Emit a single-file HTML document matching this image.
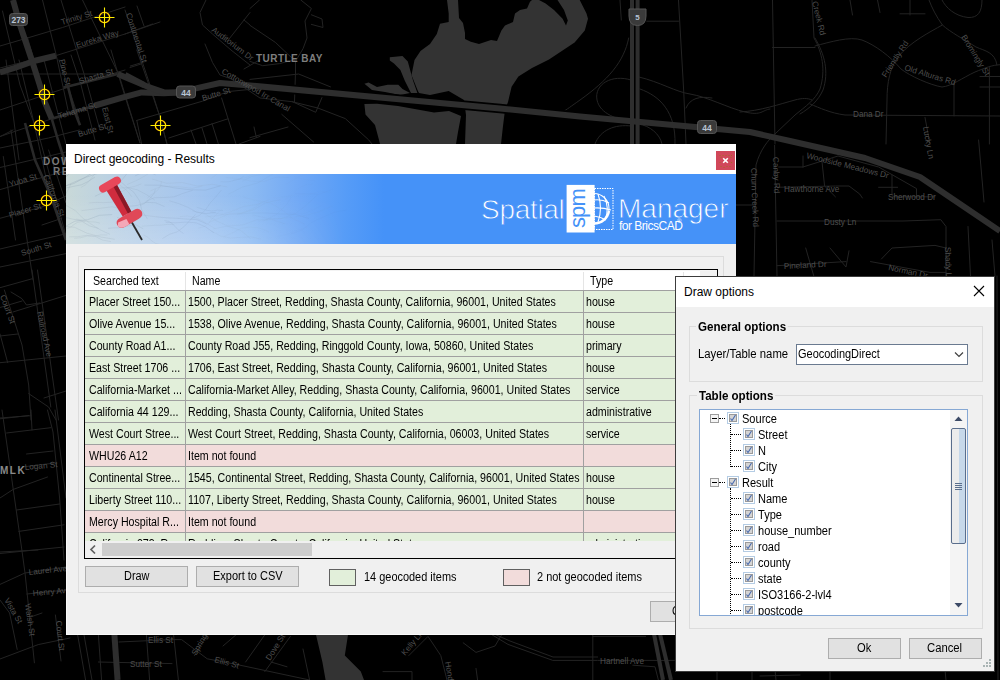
<!DOCTYPE html>
<html><head><meta charset="utf-8">
<style>
*{margin:0;padding:0;box-sizing:border-box}
html,body{width:1000px;height:680px;overflow:hidden;background:#000;font-family:"Liberation Sans",sans-serif;color:#000}
.a{position:absolute}
.ms{position:absolute;white-space:nowrap;font-size:12px;line-height:14px;transform-origin:0 0;color:#000}
.ttl{position:absolute;white-space:nowrap;font-size:12px;line-height:15px;color:#000}
#map{position:absolute;left:0;top:0}
.b{font-weight:bold;font-size:12px;line-height:14px;white-space:nowrap;transform:scaleX(.965);transform-origin:0 0}

</style></head><body>
<svg id="map" width="1000" height="680" viewBox="0 0 1000 680">
<g fill="#333333"><path d="M447.0 0.0 L458.0 0.0 L459.0 18.0 L463.0 23.0 L465.0 33.0 L465.0 39.0 L470.8 41.7 L479.0 44.0 L491.0 40.0 L497.0 41.0 L501.4 30.6 L505.0 25.5 L513.0 22.0 L515.0 13.6 L520.0 10.0 L527.0 8.5 L530.0 1.7 L532.0 0.0 L539.0 0.0 L545.6 3.4 L554.0 10.0 L562.6 18.7 L566.0 25.5 L567.8 20.4 L564.0 10.0 L557.5 0.0 L579.7 0.0 L586.5 13.6 L588.0 18.7 L584.8 30.6 L574.6 42.5 L549.0 59.5 L532.0 68.0 L518.4 76.5 L511.6 86.7 L508.0 102.0 L505.0 110.0 L503.0 126.0 L501.0 144.0 L465.0 144.0 L466.0 115.0 L464.0 100.0 L448.7 91.0 L430.0 95.0 L419.0 93.0 L417.5 90.0 L411.5 75.0 L414.5 60.0 L420.5 51.0 L430.0 44.0 L436.8 34.0 L440.0 23.8 L448.7 22.0 L448.7 13.6Z"/><path d="M364.4 104.0 L377.0 103.8 L398.0 106.0 L434.0 112.5 L449.0 111.0 L461.0 116.0 L458.0 132.0 L456.0 144.0 L380.0 144.0 L379.0 140.0 L375.0 125.0 L365.5 114.4Z"/><path d="M389.8 57.2 L402.5 56.0 L407.8 61.4 L413.0 80.5 L417.4 93.0 L411.0 93.0 L404.7 80.5 L400.4 70.0 L394.0 63.6 L389.8 60.4Z"/><path d="M364.4 83.7 L368.6 82.6 L377.0 86.9 L387.7 84.7 L398.3 84.7 L402.5 89.0 L410.0 93.0 L400.0 95.0 L385.0 92.0 L372.0 90.0Z"/><path d="M316.0 634.8 L348.0 634.8 L344.8 655.6 L360.8 671.6 L364.0 680.0 L325.6 680.0 L322.4 662.0Z"/></g>
<g fill="none" stroke="#232323" stroke-width="1" stroke-linejoin="round" stroke-linecap="round"><path d="M0.0 46.0 L29.0 37.5 L62.5 27.5 L125.0 7.0"/><path d="M56.0 55.6 L125.0 34.0 L160.0 22.0"/><path d="M75.0 85.0 L125.0 70.0"/><path d="M42.5 0.0 L56.0 54.0 L68.0 110.0"/><path d="M61.0 0.0 L87.5 85.0 L100.0 130.0"/><path d="M82.5 0.0 L119.0 75.0 L140.0 143.0"/><path d="M2.5 11.0 L20.0 85.0 L34.0 123.0 L50.0 196.0"/><path d="M27.5 37.5 L41.0 85.0"/><path d="M71.0 55.0 L81.0 85.0 L95.0 140.0"/><path d="M125.0 10.0 L150.0 85.0 L159.0 114.0 L167.0 144.0"/><path d="M125.0 34.0 L152.5 24.0"/><path d="M137.0 6.0 L144.0 26.0"/><path d="M130.0 67.5 L141.0 64.0"/><path d="M206.0 0.0 L200.0 12.5 L202.5 25.0 L212.5 34.0 L231.0 50.0 L250.0 65.0"/><path d="M227.5 41.0 L250.0 12.5"/><path d="M244.0 20.0 L250.0 25.0"/><path d="M205.0 44.0 L212.5 62.5 L220.0 75.0 L231.0 78.8 L260.0 98.0 L292.0 101.7 L317.8 108.0 L345.3 118.6 L368.6 139.8 L372.0 144.0"/><path d="M136.8 120.4 L202.4 101.2 L228.0 91.6 L260.0 88.4"/><path d="M111.0 50.0 L117.6 72.4 L127.0 102.8 L140.0 142.8"/><path d="M136.8 50.0 L159.0 114.0 L167.0 144.0"/><path d="M136.8 120.4 L141.6 144.0"/><path d="M168.8 138.0 L228.0 118.8"/><path d="M191.0 130.0 L196.0 144.0"/><path d="M202.0 128.0 L207.0 144.0"/><path d="M212.0 123.6 L218.4 144.0"/><path d="M221.6 98.0 L236.0 144.0"/><path d="M239.0 144.0 L260.0 136.4"/><path d="M244.0 69.0 L260.0 59.6"/><path d="M130.4 66.0 L146.4 61.2"/><path d="M0.0 74.0 L117.6 74.0"/><path d="M0.0 68.0 L32.0 60.0"/><path d="M0.0 110.0 L44.0 95.3 L79.4 83.5 L117.0 74.0"/><path d="M0.0 148.0 L48.5 138.0 L79.4 130.0"/><path d="M0.0 136.5 L51.8 118.8"/><path d="M6.0 60.0 L19.0 160.0"/><path d="M19.0 60.0 L34.0 123.0"/><path d="M44.0 60.0 L66.0 144.0"/><path d="M59.0 60.0 L79.0 119.0"/><path d="M250.0 8.5 L259.5 0.0"/><path d="M300.8 0.0 L311.4 8.5 L305.0 21.0 L307.0 38.0 L303.0 48.7 L295.5 61.4 L295.5 72.0 L294.5 101.7"/><path d="M250.0 25.4 L275.4 42.4 L295.5 61.4"/><path d="M250.0 61.4 L262.7 65.7 L279.7 63.6 L295.5 59.3"/><path d="M311.4 14.8 L322.0 19.0 L323.0 27.5 L311.4 24.4"/><path d="M250.0 79.4 L298.7 74.0 L330.5 86.9"/><path d="M292.4 101.7 L315.7 112.3 L322.0 97.5"/><path d="M281.8 114.4 L313.6 142.0"/><path d="M250.0 137.7 L288.0 127.0"/><path d="M254.0 127.0 L256.4 137.7"/><path d="M620.0 0.0 L621.3 20.0"/><path d="M646.7 21.2 L678.5 21.2"/><path d="M678.5 0.0 L683.8 93.0 L686.0 144.0"/><path d="M772.5 0.0 L775.0 144.0"/><path d="M772.5 47.5 L815.0 47.5"/><path d="M925.0 117.5 L930.0 144.0"/><path d="M850.0 0.0 L852.5 15.0"/><path d="M877.5 0.0 L880.0 12.5"/><path d="M910.0 0.0 L910.0 15.0"/><path d="M900.0 13.8 L925.0 13.8"/><path d="M774.6 145.4 L777.0 276.0"/><path d="M803.0 167.0 L838.0 156.0 L878.6 167.0 L916.5 188.6 L916.5 196.8"/><path d="M778.6 167.0 L803.0 167.0"/><path d="M803.0 156.0 L803.0 167.0"/><path d="M822.0 161.6 L824.6 186.0 L835.4 196.8"/><path d="M777.0 187.3 L835.4 186.0 L849.0 186.0 L859.7 194.0 L862.4 198.0"/><path d="M878.6 187.3 L897.6 187.3"/><path d="M892.0 175.0 L892.0 194.0"/><path d="M892.0 196.8 L935.0 196.8"/><path d="M777.0 221.0 L903.0 221.0 L940.8 219.7 L946.0 226.5 L946.0 276.0"/><path d="M881.4 259.0 L892.0 248.0 L935.0 245.4 L946.0 248.0"/><path d="M805.7 248.0 L813.8 276.0"/><path d="M830.0 248.0 L846.0 267.0 L849.0 250.8"/><path d="M777.0 265.7 L846.0 261.6"/><path d="M870.5 261.6 L930.0 272.4 L946.0 272.4"/><path d="M968.0 226.5 L970.5 276.0"/><path d="M992.0 240.0 L995.0 276.0"/><path d="M978.6 140.0 L984.0 202.0"/><path d="M730.0 205.0 L754.0 205.0"/><path d="M32.0 270.0 L50.8 407.0"/><path d="M37.5 270.0 L58.5 420.0"/><path d="M4.4 290.0 L22.0 345.0 L28.7 385.0 L31.0 420.0"/><path d="M28.7 393.6 L48.6 407.0 L56.0 420.0"/><path d="M0.0 287.7 L32.0 278.8"/><path d="M0.0 307.5 L22.0 301.0"/><path d="M13.0 312.0 L66.0 295.4"/><path d="M0.0 362.7 L66.0 356.0"/><path d="M0.0 336.0 L17.7 334.0"/><path d="M44.0 398.0 L66.0 391.0"/><path d="M0.0 418.0 L31.0 415.7"/><path d="M11.0 292.0 L22.0 298.7 L26.5 305.0 L39.7 303.0"/><path d="M0.0 334.0 L7.7 362.7"/><path d="M2.0 410.0 L22.0 551.0 L25.0 573.0 L34.4 662.8"/><path d="M31.0 410.0 L32.0 430.0"/><path d="M47.5 410.0 L53.0 432.0 L59.6 498.0 L64.0 560.0"/><path d="M55.0 410.0 L66.0 498.0"/><path d="M0.0 418.8 L28.7 415.5"/><path d="M6.6 433.0 L50.8 427.7"/><path d="M26.5 454.0 L53.0 451.0"/><path d="M0.0 498.0 L13.0 489.5 L47.5 477.0"/><path d="M16.5 510.0 L59.6 504.0"/><path d="M18.8 531.4 L64.0 524.8"/><path d="M0.0 553.5 L64.0 547.0"/><path d="M22.0 467.0 L55.0 463.0"/><path d="M0.0 584.4 L24.9 573.0 L66.0 567.0"/><path d="M0.0 552.0 L38.0 550.0"/><path d="M26.8 594.0 L66.0 590.0"/><path d="M30.6 617.0 L42.0 613.0"/><path d="M0.0 600.0 L9.6 613.0 L17.2 649.4"/><path d="M55.4 615.0 L61.0 661.0"/><path d="M0.0 659.0 L38.2 644.6 L70.0 638.0"/><path d="M0.0 136.6 L13.0 130.0"/><path d="M3.3 156.5 L15.5 240.0"/><path d="M11.0 130.0 L26.5 236.0 L33.0 280.0"/><path d="M37.5 130.0 L66.0 236.0"/><path d="M48.6 150.0 L66.0 203.0"/><path d="M0.0 189.6 L42.0 177.5 L66.0 170.8"/><path d="M0.0 218.3 L42.0 207.0 L66.0 196.0"/><path d="M0.0 249.0 L66.0 233.8"/><path d="M0.0 167.5 L66.0 152.0"/><path d="M0.0 267.0 L66.0 253.6"/><path d="M42.0 225.0 L61.8 218.3"/><path d="M77.6 634.8 L85.6 680.0"/><path d="M84.0 634.8 L92.0 680.0"/><path d="M98.4 634.8 L101.6 680.0"/><path d="M119.0 642.0 L172.0 639.6 L181.6 639.6 L207.2 658.8 L239.2 665.0 L309.6 680.0"/><path d="M98.4 662.0 L172.0 663.6"/><path d="M146.4 634.8 L149.6 680.0"/><path d="M173.6 634.8 L178.4 680.0"/><path d="M194.4 655.6 L207.2 634.8"/><path d="M223.0 646.0 L236.0 634.8"/><path d="M245.6 662.0 L264.8 634.8"/><path d="M264.8 671.6 L290.4 636.4"/><path d="M271.0 662.0 L287.0 666.8"/><path d="M303.0 649.0 L309.6 680.0"/><path d="M408.8 655.6 L428.0 636.4 L440.8 655.6 L447.0 680.0"/><path d="M383.0 671.6 L412.0 671.6 L412.0 680.0"/><path d="M463.2 642.8 L476.0 652.4 L495.0 646.0 L501.6 634.8"/><path d="M492.0 634.8 L508.0 644.4 L552.8 660.4 L597.6 660.4 L674.4 660.4"/><path d="M496.0 634.8 L510.0 641.0 L553.0 657.0 L597.6 657.0"/><path d="M592.8 634.8 L592.8 680.0"/><path d="M592.8 636.4 L645.6 636.4"/><path d="M476.0 668.4 L477.6 680.0"/><path d="M632.8 665.2 L655.0 666.8 L658.4 680.0"/><path d="M997.0 276.0 L998.0 680.0"/><path d="M717.0 670.0 L717.0 680.0"/><path d="M752.0 670.0 L752.0 680.0"/><path d="M775.0 670.0 L776.0 680.0"/><path d="M830.0 670.0 L830.0 680.0"/><path d="M945.0 670.0 L946.0 680.0"/><path d="M760.0 676.0 L800.0 675.0"/><path d="M628.7 38 C624 62, 608 80, 580 100 S 565 110, 556 114"/><path d="M631 80 C612 74, 594 84, 597 100 C600 114, 618 120, 631 121"/><path d="M639 77 C660 82, 676 92, 690 94 C708 97, 728 108, 745 112 S 762 110, 770 109"/><path d="M640 89 C660 96, 676 112, 675 144"/><path d="M686 108 C690 98, 700 96, 712 98"/><path d="M595 144 C600 130, 615 124, 631 126"/><path d="M639 124 C650 126, 660 134, 662 144"/><path d="M815 46 C830 42, 850 36, 862 40 C875 45, 890 56, 901 69 C910 76, 930 85, 942 87 C952 86, 962 78, 975 72 C985 68, 992 65, 1000 64.7"/><path d="M942.4 25 C930 32, 910 42, 898 57 C890 68, 887 82, 887 100 L886 144"/><path d="M929 0 C932 8, 936 16, 942.4 25 C950 32, 965 40, 976 47 C985 51, 995 52, 997 65"/><path d="M942 0 C946 8, 955 16, 968 17.5 C978 18, 982 12, 982 0"/><path d="M954 83 L954 116"/><path d="M989.4 67.6 L989.4 144"/><path d="M980 76.5 H1000"/><path d="M980 87 H1000"/><path d="M812 0 L814 38 C822 52, 826 70, 820 89 C815 100, 806 106, 795 115 L776 133 C768 140, 760 150, 756 165 L754 276"/><path d="M815 38 C825 55, 829 72, 823 90 C818 101, 810 108, 800 114"/><path d="M740 112 C760 111, 780 104, 795 100 C802 98, 808 98, 812 100"/><path d="M810 104 C820 108, 830 113, 845 115 L1000 116"/></g>
<g fill="none" stroke="#292929" stroke-width="2.6" stroke-linejoin="round"><path d="M63.5 87.5 L90.0 81.0 L117.6 74.0"/><path d="M51.8 118.8 L95.0 105.5"/><path d="M67.5 84.8 L74.0 110.0 L80.0 125.3"/><path d="M51.8 118.8 L58.0 140.0 L66.0 165.0"/><path d="M25.0 123.0 L35.0 160.0 L50.8 196.0 L66.0 240.0"/></g>
<path d="M250 85.5 L440 103 L500 108.5 L580 116.5" stroke="#000" stroke-width="9.5" fill="none"/><g fill="none" stroke="#2e2e2e" stroke-width="6" stroke-linejoin="round"><path d="M13.0 0.0 L20.0 25.0 L31.7 59.7 L39.7 84.8 L44.7 101.8 L51.8 118.8"/><path d="M0.0 72.5 L16.0 67.5 L34.0 61.0 L56.0 55.6"/><path d="M95.0 105.5 L124.0 97.2 L141.6 92.4 L164.0 93.2 L176.8 92.4"/><path d="M117.6 74.0 L148.0 86.8 L164.0 92.4 L176.8 92.4"/><path d="M176.0 92.0 L196.0 88.4 L220.0 83.0 L250.0 85.5 L440.0 103.0 L500.0 108.5 L580.0 116.5 L750.0 132.0 L790.0 141.0 L865.0 158.0 L920.0 177.0 L960.0 204.0 L1000.0 231.0"/><path d="M125.0 75.0 L144.0 85.0"/><path d="M114.4 634.8 L117.6 680.0"/></g>
<g stroke="#2e2e2e" stroke-width="4" fill="none"><path d="M632 0 L632 144"/><path d="M637.6 0 L637.6 144"/><path d="M654 634 L663 680"/><path d="M660 634 L671 680"/></g>
<g font-family="Liberation Sans" font-weight="bold"><rect x="9.5" y="13.5" width="18" height="12" rx="3" fill="#3a3a3a" stroke="#555"/><text x="18.5" y="23" font-size="8.5" fill="#b8c4d4" text-anchor="middle">273</text><rect x="176.5" y="86" width="19" height="12" rx="3" fill="#3a3a3a" stroke="#555"/><text x="186" y="95.5" font-size="8.5" fill="#b8c4d4" text-anchor="middle">44</text><rect x="697.5" y="120.5" width="19" height="13" rx="3" fill="#3a3a3a" stroke="#555"/><text x="707" y="130.5" font-size="8.5" fill="#b8c4d4" text-anchor="middle">44</text><path d="M629 9 L646 9 L646 16 Q646 25.5 637.5 25.5 Q629 25.5 629 16Z" fill="#3a3a3a" stroke="#555"/><text x="637.5" y="20" font-size="8" fill="#b8c4d4" text-anchor="middle">5</text></g>
<g font-family="Liberation Sans" fill="#7a7a7a"><text x="256" y="61.5" font-size="10" font-weight="bold" letter-spacing="0.45" fill="#7e7e7e">TURTLE BAY</text><text x="0" y="474" font-size="10" font-weight="bold" letter-spacing="1.5" fill="#8a8a8a">MLK</text><text x="43" y="164.5" font-size="10" font-weight="bold" letter-spacing="1.5" fill="#7a7a7a">DOW</text><text x="53" y="174.5" font-size="10" font-weight="bold" letter-spacing="1.5" fill="#7a7a7a">RE</text></g>
<g font-family="Liberation Sans" font-size="8.2" fill="#4e4e4e"><text transform="translate(62,25) rotate(-17)">Trinity St</text><text transform="translate(77,48) rotate(-17)">Eureka Way</text><text transform="translate(80,84) rotate(-17)">Shasta St</text><text transform="translate(59,119) rotate(-17)">Tehama St</text><text transform="translate(79,137) rotate(-17)">Butte St</text><text transform="translate(203,101) rotate(-17)">Butte St</text><text transform="translate(126,14) rotate(72)">Continental St</text><text transform="translate(59,60) rotate(76)">Pine St</text><text transform="translate(102,108) rotate(76)">East St</text><text transform="translate(211,31) rotate(37)">Auditorium Dr</text><text transform="translate(221,73) rotate(30)">Cottonwood Irr Canal</text><text transform="translate(886,78) rotate(-57)">Friendly Rd</text><text transform="translate(904,70) rotate(17)">Old Alturas Rd</text><text transform="translate(961,37) rotate(58)">Bromingly St</text><text transform="translate(853,117) rotate(0)">Dana Dr</text><text transform="translate(923,127) rotate(80)">Lucky Ln</text><text transform="translate(806,158) rotate(14)">Woodside Meadows Dr</text><text transform="translate(812,2) rotate(76)">Creek Rd</text><text transform="translate(784,192) rotate(0)">Hawthorne Ave</text><text transform="translate(824,225) rotate(0)">Dusty Ln</text><text transform="translate(784,269) rotate(-3)">Pineland Dr</text><text transform="translate(888,270) rotate(12)">Norman Dr</text><text transform="translate(773,157) rotate(88)">Canby Rd</text><text transform="translate(751,168) rotate(88)">Churn Creek Rd</text><text transform="translate(888,200) rotate(0)">Sherwood Dr</text><text transform="translate(945,247) rotate(88)">Shady Ln</text><text transform="translate(10,187) rotate(-17)">Yuba St</text><text transform="translate(10,218) rotate(-17)">Placer St</text><text transform="translate(22,256) rotate(-17)">South St</text><text transform="translate(43,176) rotate(68)">California St</text><text transform="translate(0,296) rotate(70)">Court St</text><text transform="translate(37,312) rotate(78)">Railroad Ave</text><text transform="translate(25,470) rotate(-5)">Logan St</text><text transform="translate(29,575) rotate(-6)">Laurel Ave</text><text transform="translate(33,596) rotate(-5)">Henry Ave</text><text transform="translate(25,604) rotate(82)">Walsh St</text><text transform="translate(4,600) rotate(60)">Vista St</text><text transform="translate(56,621) rotate(84)">Court St</text><text transform="translate(148,643) rotate(0)">Ellis St</text><text transform="translate(214,662) rotate(15)">Ellis St</text><text transform="translate(130,667) rotate(0)">Sutter St</text><text transform="translate(196,656) rotate(-60)">Spring</text><text transform="translate(270,661) rotate(-58)">Dove St</text><text transform="translate(405,656) rotate(-50)">Kelly Ln</text><text transform="translate(600,664) rotate(0)">Hartnell Ave</text><text transform="translate(445,662) rotate(80)">Honda</text></g>
<g stroke="#ffee00" fill="none"><circle cx="104.5" cy="17.5" r="5.2" stroke="#7a2400" stroke-width="1.8"/><circle cx="104.5" cy="17.5" r="5.2" stroke-width="1.05"/><path d="M94.5 17.5 H114.5 M104.5 7.5 V27.5" stroke-width="1.1"/><circle cx="44.5" cy="94.5" r="5.2" stroke="#7a2400" stroke-width="1.8"/><circle cx="44.5" cy="94.5" r="5.2" stroke-width="1.05"/><path d="M34.5 94.5 H54.5 M44.5 84.5 V104.5" stroke-width="1.1"/><circle cx="39.5" cy="125.5" r="5.2" stroke="#7a2400" stroke-width="1.8"/><circle cx="39.5" cy="125.5" r="5.2" stroke-width="1.05"/><path d="M29.5 125.5 H49.5 M39.5 115.5 V135.5" stroke-width="1.1"/><circle cx="160.5" cy="125.5" r="5.2" stroke="#7a2400" stroke-width="1.8"/><circle cx="160.5" cy="125.5" r="5.2" stroke-width="1.05"/><path d="M150.5 125.5 H170.5 M160.5 115.5 V135.5" stroke-width="1.1"/><circle cx="46.5" cy="200.5" r="5.2" stroke="#7a2400" stroke-width="1.8"/><circle cx="46.5" cy="200.5" r="5.2" stroke-width="1.05"/><path d="M36.5 200.5 H56.5 M46.5 190.5 V210.5" stroke-width="1.1"/></g>
</svg>
<div class="a" style="left:66px;top:144px;width:670px;height:491px;background:#f0f0f0"></div>
<div class="a" style="left:66px;top:144px;width:1px;height:491px;background:#fbfbfb"></div>
<div class="a" style="left:66px;top:634px;width:670px;height:1px;background:#fbfbfb"></div>
<div class="a" style="left:66px;top:144px;width:670px;height:30px;background:#fff"></div>
<div class="a ttl" style="left:74px;top:152px">Direct geocoding - Results</div>
<div class="a" style="left:716px;top:151px;width:19px;height:19px;background:#d1475a"></div>
<svg class="a" style="left:716px;top:151px" width="19" height="19"><path d="M7.2 7.2 L11.8 11.8 M11.8 7.2 L7.2 11.8" stroke="#fff" stroke-width="1.6"/><g fill="#a07020"><circle cx="4" cy="4.5" r=".6"/><circle cx="7" cy="4.5" r=".6"/><circle cx="10" cy="4.5" r=".6"/><circle cx="13" cy="4.5" r=".6"/><circle cx="15.5" cy="4.5" r=".6"/><circle cx="5" cy="6.5" r=".6"/><circle cx="15" cy="6.5" r=".6"/><circle cx="4" cy="11.5" r=".6"/><circle cx="15.5" cy="11.5" r=".6"/><circle cx="5" cy="15.5" r=".6"/><circle cx="8" cy="16.5" r=".6"/><circle cx="11" cy="15.5" r=".6"/><circle cx="14" cy="15.5" r=".6"/></g></svg>
<div class="a" style="left:66px;top:144px;width:670px;height:100px"><div class="a" style="left:0;top:30px;width:670px;height:70px;overflow:hidden;background:linear-gradient(90deg,#c9d9d8 0px,#b9d0e4 50px,#a6c6ee 120px,#8cbaf2 185px,#70a8f5 235px,#569cf7 280px,#4592f8 318px)">
<div class="a" style="left:0;top:0;width:300px;height:70px;background:linear-gradient(180deg,rgba(255,255,255,0) 30%,rgba(255,255,255,.22) 100%);-webkit-mask-image:linear-gradient(90deg,#000 0,#000 150px,transparent 280px)"></div>
<svg class="a" style="left:0;top:0" width="670" height="70">
 <g stroke-width="0.8" fill="none" opacity="0.4"><path d="M61.0 10.6 L71.8 5.9 L82.1 0.0 L89.7 -9.0 L97.3 -18.0 L101.2 -29.2" stroke="#8898a8" stroke-opacity="0.38"/><path d="M84.5 16.8 L94.3 12.7 L104.9 12.3 L115.5 13.0 L126.0 14.4 L136.4 12.1" stroke="#8898a8" stroke-opacity="0.33"/><path d="M-7.6 15.5 L2.0 10.8 L11.8 6.5 L21.8 2.7 L31.9 -0.6 L42.4 -2.4" stroke="#6a7e96" stroke-opacity="0.52"/><path d="M125.4 44.7 L133.3 41.5 L139.5 35.9 L144.3 28.9 L150.0 22.6 L155.4 16.1" stroke="#5a6e88" stroke-opacity="0.25"/><path d="M96.4 64.6 L103.5 60.3 L111.4 57.7 L118.1 52.6 L123.8 46.5 L129.5 40.4" stroke="#5a6e88" stroke-opacity="0.31"/><path d="M162.4 20.2 L176.4 13.1 L191.7 9.0 L205.2 1.0 L218.7 -7.2 L228.3 -19.7" stroke="#6a7e96" stroke-opacity="0.18"/><path d="M171.1 40.1 L185.6 39.0 L200.1 39.0 L214.6 39.9 L229.1 40.3 L242.9 44.5" stroke="#5a6e88" stroke-opacity="0.16"/><path d="M98.5 46.5 L103.1 47.5 L107.0 50.2 L110.1 53.8 L113.7 56.8 L117.6 59.5" stroke="#5a6e88" stroke-opacity="0.30"/><path d="M-14.4 32.3 L-10.0 28.2 L-4.8 25.1 L-0.8 20.7 L2.3 15.5 L4.9 10.0" stroke="#8898a8" stroke-opacity="0.53"/><path d="M0.1 31.4 L9.4 36.6 L16.8 44.2 L25.4 50.3 L34.4 55.9 L44.0 60.4" stroke="#8898a8" stroke-opacity="0.50"/><path d="M219.4 10.6 L224.8 7.5 L230.0 4.5 L235.5 1.8 L240.4 -1.9 L243.5 -7.2" stroke="#8898a8" stroke-opacity="0.08"/><path d="M113.6 42.7 L121.4 41.9 L129.0 43.8 L136.3 46.7 L142.9 50.9 L149.6 54.9" stroke="#8898a8" stroke-opacity="0.27"/><path d="M79.5 27.6 L88.5 23.7 L98.3 23.5 L108.0 22.9 L117.1 19.3 L126.5 16.4" stroke="#6a7e96" stroke-opacity="0.34"/><path d="M-19.9 10.6 L-15.6 7.8 L-10.5 6.4 L-5.4 5.4 L-0.7 3.1 L3.4 -0.1" stroke="#5a6e88" stroke-opacity="0.54"/><path d="M130.6 33.2 L135.7 34.8 L140.9 36.3 L146.2 37.0 L151.5 36.1 L156.9 36.4" stroke="#5a6e88" stroke-opacity="0.24"/><path d="M99.7 48.4 L109.8 48.8 L120.0 48.1 L130.2 48.8 L139.5 52.9 L147.9 58.8" stroke="#5a6e88" stroke-opacity="0.30"/><path d="M224.6 60.4 L236.1 55.8 L245.9 48.3 L257.1 43.1 L268.5 38.2 L280.6 36.0" stroke="#5a6e88" stroke-opacity="0.08"/><path d="M139.1 42.9 L152.5 41.6 L165.3 37.5 L177.8 32.4 L191.1 30.5 L203.6 25.4" stroke="#8898a8" stroke-opacity="0.22"/><path d="M68.9 2.0 L72.8 0.1 L76.9 -1.2 L81.3 -0.9 L85.6 -0.8 L89.6 0.8" stroke="#5a6e88" stroke-opacity="0.36"/><path d="M218.8 25.5 L224.4 22.1 L229.1 17.3 L234.2 13.1 L240.5 10.8 L247.1 10.1" stroke="#8898a8" stroke-opacity="0.08"/><path d="M207.3 24.1 L219.0 23.0 L230.5 20.8 L242.2 20.7 L253.5 17.7 L265.2 18.4" stroke="#8898a8" stroke-opacity="0.09"/><path d="M177.3 23.3 L190.5 26.5 L203.9 28.8 L215.7 35.5 L226.1 44.3 L238.5 50.1" stroke="#7d90a4" stroke-opacity="0.15"/><path d="M-13.1 41.4 L-3.6 42.8 L5.7 44.9 L15.1 46.8 L23.3 51.8 L32.5 54.5" stroke="#7d90a4" stroke-opacity="0.53"/><path d="M-14.7 56.0 L-2.2 53.3 L8.9 47.2 L21.6 45.7 L33.5 41.3 L46.2 40.6" stroke="#6a7e96" stroke-opacity="0.53"/><path d="M43.0 20.5 L49.7 19.2 L56.4 17.4 L62.2 13.8 L68.9 12.3 L75.4 9.9" stroke="#8898a8" stroke-opacity="0.41"/><path d="M145.6 57.1 L154.5 62.0 L164.5 64.1 L174.7 63.4 L184.9 62.8 L194.8 65.2" stroke="#7d90a4" stroke-opacity="0.21"/><path d="M132.1 54.3 L137.7 52.7 L142.5 49.5 L146.0 44.8 L150.0 40.7 L154.2 36.6" stroke="#8898a8" stroke-opacity="0.24"/><path d="M176.1 7.4 L185.6 2.6 L196.0 -0.0 L206.4 -2.6 L217.0 -4.7 L227.7 -4.5" stroke="#6a7e96" stroke-opacity="0.15"/><path d="M90.8 42.9 L100.8 43.8 L110.9 44.3 L120.9 45.1 L131.0 45.7 L140.2 49.7" stroke="#5a6e88" stroke-opacity="0.32"/><path d="M210.7 62.5 L217.0 61.3 L223.2 59.6 L229.1 57.0 L235.3 55.2 L241.3 53.0" stroke="#7d90a4" stroke-opacity="0.08"/><path d="M147.4 54.9 L161.9 52.0 L176.6 51.0 L190.4 45.9 L205.2 45.2 L219.2 49.9" stroke="#7d90a4" stroke-opacity="0.21"/><path d="M166.7 6.6 L180.9 3.3 L194.1 -3.0 L208.1 -7.1 L222.7 -5.5 L237.3 -5.0" stroke="#8898a8" stroke-opacity="0.17"/><path d="M28.9 22.3 L40.4 16.9 L51.6 11.0 L59.7 1.3 L66.5 -9.5 L74.3 -19.5" stroke="#6a7e96" stroke-opacity="0.44"/><path d="M8.2 64.3 L14.9 63.7 L21.4 61.9 L28.2 62.3 L34.8 60.9 L41.5 61.0" stroke="#8898a8" stroke-opacity="0.48"/><path d="M192.4 47.3 L207.6 45.4 L222.9 43.7 L238.1 41.8 L253.0 37.9 L266.9 31.5" stroke="#7d90a4" stroke-opacity="0.12"/><path d="M86.3 5.1 L101.0 9.3 L116.2 8.5 L131.1 12.0 L146.2 10.3 L161.3 12.9" stroke="#8898a8" stroke-opacity="0.33"/><path d="M-17.1 69.6 L-8.7 72.9 L0.3 73.0 L9.2 74.6 L16.9 79.1 L22.5 86.2" stroke="#5a6e88" stroke-opacity="0.53"/><path d="M-7.4 14.1 L0.3 13.9 L7.9 12.3 L15.5 10.8 L22.5 7.3 L28.9 3.1" stroke="#6a7e96" stroke-opacity="0.51"/><path d="M228.6 2.6 L232.6 3.9 L236.6 5.2 L240.8 5.7 L245.0 6.1 L249.2 6.9" stroke="#8898a8" stroke-opacity="0.08"/><path d="M144.1 38.2 L158.6 40.7 L173.2 39.9 L187.3 35.9 L200.1 28.7 L214.5 25.7" stroke="#7d90a4" stroke-opacity="0.21"/><path d="M81.2 24.3 L84.6 21.2 L88.6 18.8 L92.1 15.7 L94.6 11.8 L95.6 7.2" stroke="#8898a8" stroke-opacity="0.34"/><path d="M197.6 46.9 L204.3 43.7 L210.8 40.2 L216.1 35.1 L221.2 29.7 L225.2 23.5" stroke="#5a6e88" stroke-opacity="0.10"/><path d="M223.2 38.3 L230.0 39.5 L236.9 39.8 L243.4 37.5 L249.7 34.5 L255.9 31.4" stroke="#7d90a4" stroke-opacity="0.08"/><path d="M42.0 54.3 L47.1 53.9 L52.2 53.8 L57.3 53.2 L62.2 51.9 L67.2 51.1" stroke="#6a7e96" stroke-opacity="0.42"/><path d="M126.4 37.0 L139.1 40.0 L150.2 46.7 L162.0 52.3 L174.4 56.2 L184.4 64.5" stroke="#7d90a4" stroke-opacity="0.25"/><path d="M51.0 43.3 L56.4 45.4 L61.7 47.5 L67.1 49.4 L72.2 52.1 L77.3 54.8" stroke="#6a7e96" stroke-opacity="0.40"/><path d="M186.6 40.9 L200.9 44.3 L215.6 44.6 L229.4 39.5 L241.1 30.6 L251.8 20.4" stroke="#6a7e96" stroke-opacity="0.13"/><path d="M74.2 31.6 L78.3 29.6 L81.9 26.7 L85.0 23.2 L87.9 19.7 L89.4 15.3" stroke="#6a7e96" stroke-opacity="0.35"/><path d="M144.8 4.6 L155.2 -2.9 L164.1 -12.2 L174.4 -19.8 L182.7 -29.6 L192.8 -37.6" stroke="#8898a8" stroke-opacity="0.21"/><path d="M103.5 26.8 L112.8 29.6 L121.8 33.3 L130.4 38.0 L140.0 39.6 L149.7 38.4" stroke="#5a6e88" stroke-opacity="0.29"/><path d="M142.9 48.5 L153.4 44.0 L163.9 39.4 L175.4 39.1 L186.1 35.1 L195.7 28.8" stroke="#8898a8" stroke-opacity="0.21"/><path d="M52.7 36.2 L61.5 32.4 L71.0 31.5 L80.1 28.3 L89.6 28.8 L98.5 32.5" stroke="#6a7e96" stroke-opacity="0.39"/><path d="M52.4 5.4 L59.8 12.2 L67.9 18.3 L73.4 26.6 L75.9 36.4 L81.4 44.8" stroke="#6a7e96" stroke-opacity="0.40"/><path d="M15.4 36.7 L30.7 34.7 L46.0 32.8 L61.2 35.6 L75.7 40.9 L91.0 42.9" stroke="#8898a8" stroke-opacity="0.47"/><path d="M78.5 11.1 L93.9 11.2 L109.1 14.0 L124.3 15.8 L139.7 16.1 L154.5 11.8" stroke="#5a6e88" stroke-opacity="0.34"/><path d="M-19.6 52.6 L-5.5 51.8 L8.5 53.3 L21.2 59.3 L34.8 63.0 L48.7 65.3" stroke="#8898a8" stroke-opacity="0.54"/><path d="M77.5 60.9 L81.9 63.2 L85.4 66.7 L89.5 69.4 L94.2 70.6 L98.8 72.4" stroke="#7d90a4" stroke-opacity="0.34"/><path d="M42.3 18.6 L51.5 14.3 L61.6 13.5 L71.5 15.9 L80.4 20.6 L88.9 26.2" stroke="#7d90a4" stroke-opacity="0.42"/><path d="M159.9 3.5 L172.6 4.6 L185.2 7.1 L197.9 7.5 L210.0 3.3 L222.8 3.5" stroke="#7d90a4" stroke-opacity="0.18"/><path d="M22.7 29.0 L30.0 28.4 L37.4 28.6 L44.8 28.3 L51.9 26.4 L59.1 24.5" stroke="#8898a8" stroke-opacity="0.45"/><path d="M9.9 45.0 L14.8 45.9 L19.6 46.9 L24.4 47.8 L29.3 48.0 L34.0 49.2" stroke="#8898a8" stroke-opacity="0.48"/><path d="M14.9 13.5 L19.3 10.9 L23.0 7.4 L26.0 3.3 L29.3 -0.6 L33.5 -3.4" stroke="#8898a8" stroke-opacity="0.47"/><path d="M75.7 52.2 L82.2 51.8 L88.7 51.3 L95.2 51.2 L101.7 50.4 L108.2 50.6" stroke="#7d90a4" stroke-opacity="0.35"/><path d="M3.1 62.8 L11.8 62.7 L20.3 61.4 L28.8 62.2 L36.5 66.1 L45.0 67.6" stroke="#8898a8" stroke-opacity="0.49"/><path d="M157.4 62.7 L166.3 58.9 L174.8 54.4 L184.4 53.0 L194.0 54.1 L203.0 57.8" stroke="#8898a8" stroke-opacity="0.19"/><path d="M42.1 7.6 L47.9 8.2 L53.2 10.7 L58.0 14.1 L62.3 18.0 L65.7 22.8" stroke="#8898a8" stroke-opacity="0.42"/><path d="M1.3 54.4 L5.0 53.0 L8.1 50.4 L11.5 48.4 L15.5 47.7 L19.5 47.5" stroke="#8898a8" stroke-opacity="0.50"/><path d="M154.6 7.8 L159.5 7.9 L164.3 7.5 L168.9 6.1 L173.7 5.1 L177.7 2.3" stroke="#5a6e88" stroke-opacity="0.19"/><path d="M229.1 19.5 L236.9 19.6 L244.7 19.8 L252.5 20.3 L259.9 17.9 L267.1 15.0" stroke="#5a6e88" stroke-opacity="0.08"/><path d="M-6.2 13.6 L7.9 9.5 L20.7 2.4 L33.0 -5.4 L44.5 -14.4 L55.9 -23.5" stroke="#5a6e88" stroke-opacity="0.51"/></g>
 <g transform="translate(76,66) rotate(-30)">
  <path d="M0 0 L0 -21" stroke="#2a2a2a" stroke-width="1.8"/>
  <path d="M-14 -25 Q-14 -30 -8 -30 L8 -30 Q14 -30 14 -25 Q14 -20 8 -20 L-8 -20 Q-14 -20 -14 -25Z" fill="#e04858"/>
  <path d="M-14 -24 Q-13 -20 -8 -20 L-3 -20 L-3 -26 L-12 -27Z" fill="#f4a8b8"/>
  <path d="M-5 -30 L-6 -61 L6 -61 L5 -30Z" fill="#d02c3e"/>
  <path d="M1 -30 L2 -61 L6 -61 L5 -30Z" fill="#8a1826"/>
  <path d="M-12 -64 Q-12 -68 -8 -68 L8 -68 Q12 -68 12 -64 Q12 -60 8 -60 L-8 -60 Q-12 -60 -12 -64Z" fill="#e8485a"/>
 </g>
 <text x="415" y="45" font-family="Liberation Sans" font-size="28" fill="#fff" stroke="#4592f8" stroke-width="0.8" letter-spacing="-0.3">Spatial</text>
 <rect x="500.6" y="10.9" width="28" height="47.6" fill="#fff"/>
 <text transform="translate(519,54) rotate(-90)" font-family="Liberation Sans" font-size="22" fill="#4592f8" letter-spacing="-0.9">spm</text>
 <rect x="528.5" y="14.5" width="18.5" height="41" fill="none" stroke="#fff" stroke-width="1" stroke-dasharray="1.5 1"/>
 <g fill="none" stroke="#fff" stroke-width="1.1">
  <path d="M528 19.5 A15 15 0 0 1 528 49.5"/><path d="M543 37 A15 15 0 0 1 528 49.5" stroke-width="2.4"/>
  <path d="M528 26 Q536 25 543 29"/><path d="M528 34 Q537 33.5 545 36"/><path d="M528 42 Q535 43 540 46"/>
  <path d="M532 20 Q537 34 532 48"/><path d="M538 22 Q544 34 539 46"/>
 </g>
 <text x="552" y="43.5" font-family="Liberation Sans" font-size="28" fill="#fff" stroke="#4592f8" stroke-width="0.8" letter-spacing="0">Manager</text>
 <text x="553" y="55.5" font-family="Liberation Sans" font-size="12" fill="#fff" letter-spacing="-0.5">for BricsCAD</text>
 <text x="611" y="49" font-family="Liberation Sans" font-size="6" fill="#fff">®</text>
</svg>
</div>
</div>
<div class="a" style="left:78px;top:256px;width:646px;height:337px;border:1px solid #dcdcdc"></div>
<div class="a" style="left:84px;top:269px;width:634px;height:290px;background:#fff;border:1px solid #000"></div>
<div class="a" style="left:85px;top:270px;width:632px;height:1px;background:#f3f3f3"></div>
<div class="a" style="left:185px;top:272px;width:1px;height:18px;background:#e5e5e5"></div>
<div class="a" style="left:583px;top:272px;width:1px;height:18px;background:#e5e5e5"></div>
<div class="a" style="left:683px;top:272px;width:1px;height:18px;background:#e5e5e5"></div>
<div class="a" style="left:700px;top:271px;width:17px;height:19px;background:#f0f0f0"></div>
<div class="ms" style="left:93px;top:274px;transform:scaleX(.887)">Searched text</div>
<div class="ms" style="left:192px;top:274px;transform:scaleX(.887)">Name</div>
<div class="ms" style="left:590px;top:274px;transform:scaleX(.887)">Type</div>
<div class="a" style="left:85px;top:290px;width:632px;height:1px;background:#a0a0a0"></div>
<div class="a" style="left:85px;top:291px;width:632px;height:21px;background:#e2efda"></div>
<div class="ms" style="left:89px;top:295px;transform:scaleX(.887)">Placer Street 150...</div>
<div class="ms" style="left:188px;top:295px;transform:scaleX(.887)">1500, Placer Street, Redding, Shasta County, California, 96001, United States</div>
<div class="ms" style="left:586px;top:295px;transform:scaleX(.887)">house</div>
<div class="a" style="left:185px;top:290px;width:1px;height:22px;background:#a0a0a0"></div>
<div class="a" style="left:583px;top:290px;width:1px;height:22px;background:#a0a0a0"></div>
<div class="a" style="left:85px;top:312px;width:632px;height:1px;background:#a0a0a0"></div>
<div class="a" style="left:85px;top:313px;width:632px;height:21px;background:#e2efda"></div>
<div class="ms" style="left:89px;top:317px;transform:scaleX(.887)">Olive Avenue 15...</div>
<div class="ms" style="left:188px;top:317px;transform:scaleX(.887)">1538, Olive Avenue, Redding, Shasta County, California, 96001, United States</div>
<div class="ms" style="left:586px;top:317px;transform:scaleX(.887)">house</div>
<div class="a" style="left:185px;top:312px;width:1px;height:22px;background:#a0a0a0"></div>
<div class="a" style="left:583px;top:312px;width:1px;height:22px;background:#a0a0a0"></div>
<div class="a" style="left:85px;top:334px;width:632px;height:1px;background:#a0a0a0"></div>
<div class="a" style="left:85px;top:335px;width:632px;height:21px;background:#e2efda"></div>
<div class="ms" style="left:89px;top:339px;transform:scaleX(.887)">County Road A1...</div>
<div class="ms" style="left:188px;top:339px;transform:scaleX(.887)">County Road J55, Redding, Ringgold County, Iowa, 50860, United States</div>
<div class="ms" style="left:586px;top:339px;transform:scaleX(.887)">primary</div>
<div class="a" style="left:185px;top:334px;width:1px;height:22px;background:#a0a0a0"></div>
<div class="a" style="left:583px;top:334px;width:1px;height:22px;background:#a0a0a0"></div>
<div class="a" style="left:85px;top:356px;width:632px;height:1px;background:#a0a0a0"></div>
<div class="a" style="left:85px;top:357px;width:632px;height:21px;background:#e2efda"></div>
<div class="ms" style="left:89px;top:361px;transform:scaleX(.887)">East Street 1706 ...</div>
<div class="ms" style="left:188px;top:361px;transform:scaleX(.887)">1706, East Street, Redding, Shasta County, California, 96001, United States</div>
<div class="ms" style="left:586px;top:361px;transform:scaleX(.887)">house</div>
<div class="a" style="left:185px;top:356px;width:1px;height:22px;background:#a0a0a0"></div>
<div class="a" style="left:583px;top:356px;width:1px;height:22px;background:#a0a0a0"></div>
<div class="a" style="left:85px;top:378px;width:632px;height:1px;background:#a0a0a0"></div>
<div class="a" style="left:85px;top:379px;width:632px;height:21px;background:#e2efda"></div>
<div class="ms" style="left:89px;top:383px;transform:scaleX(.887)">California-Market ...</div>
<div class="ms" style="left:188px;top:383px;transform:scaleX(.887)">California-Market Alley, Redding, Shasta County, California, 96001, United States</div>
<div class="ms" style="left:586px;top:383px;transform:scaleX(.887)">service</div>
<div class="a" style="left:185px;top:378px;width:1px;height:22px;background:#a0a0a0"></div>
<div class="a" style="left:583px;top:378px;width:1px;height:22px;background:#a0a0a0"></div>
<div class="a" style="left:85px;top:400px;width:632px;height:1px;background:#a0a0a0"></div>
<div class="a" style="left:85px;top:401px;width:632px;height:21px;background:#e2efda"></div>
<div class="ms" style="left:89px;top:405px;transform:scaleX(.887)">California 44 129...</div>
<div class="ms" style="left:188px;top:405px;transform:scaleX(.887)">Redding, Shasta County, California, United States</div>
<div class="ms" style="left:586px;top:405px;transform:scaleX(.887)">administrative</div>
<div class="a" style="left:185px;top:400px;width:1px;height:22px;background:#a0a0a0"></div>
<div class="a" style="left:583px;top:400px;width:1px;height:22px;background:#a0a0a0"></div>
<div class="a" style="left:85px;top:422px;width:632px;height:1px;background:#a0a0a0"></div>
<div class="a" style="left:85px;top:423px;width:632px;height:21px;background:#e2efda"></div>
<div class="ms" style="left:89px;top:427px;transform:scaleX(.887)">West Court Stree...</div>
<div class="ms" style="left:188px;top:427px;transform:scaleX(.887)">West Court Street, Redding, Shasta County, California, 06003, United States</div>
<div class="ms" style="left:586px;top:427px;transform:scaleX(.887)">service</div>
<div class="a" style="left:185px;top:422px;width:1px;height:22px;background:#a0a0a0"></div>
<div class="a" style="left:583px;top:422px;width:1px;height:22px;background:#a0a0a0"></div>
<div class="a" style="left:85px;top:444px;width:632px;height:1px;background:#a0a0a0"></div>
<div class="a" style="left:85px;top:445px;width:632px;height:21px;background:#f2dcdb"></div>
<div class="ms" style="left:89px;top:449px;transform:scaleX(.887)">WHU26 A12</div>
<div class="ms" style="left:188px;top:449px;transform:scaleX(.887)">Item not found</div>
<div class="a" style="left:185px;top:444px;width:1px;height:22px;background:#a0a0a0"></div>
<div class="a" style="left:583px;top:444px;width:1px;height:22px;background:#a0a0a0"></div>
<div class="a" style="left:85px;top:466px;width:632px;height:1px;background:#a0a0a0"></div>
<div class="a" style="left:85px;top:467px;width:632px;height:21px;background:#e2efda"></div>
<div class="ms" style="left:89px;top:471px;transform:scaleX(.887)">Continental Stree...</div>
<div class="ms" style="left:188px;top:471px;transform:scaleX(.887)">1545, Continental Street, Redding, Shasta County, California, 96001, United States</div>
<div class="ms" style="left:586px;top:471px;transform:scaleX(.887)">house</div>
<div class="a" style="left:185px;top:466px;width:1px;height:22px;background:#a0a0a0"></div>
<div class="a" style="left:583px;top:466px;width:1px;height:22px;background:#a0a0a0"></div>
<div class="a" style="left:85px;top:488px;width:632px;height:1px;background:#a0a0a0"></div>
<div class="a" style="left:85px;top:489px;width:632px;height:21px;background:#e2efda"></div>
<div class="ms" style="left:89px;top:493px;transform:scaleX(.887)">Liberty Street 110...</div>
<div class="ms" style="left:188px;top:493px;transform:scaleX(.887)">1107, Liberty Street, Redding, Shasta County, California, 96001, United States</div>
<div class="ms" style="left:586px;top:493px;transform:scaleX(.887)">house</div>
<div class="a" style="left:185px;top:488px;width:1px;height:22px;background:#a0a0a0"></div>
<div class="a" style="left:583px;top:488px;width:1px;height:22px;background:#a0a0a0"></div>
<div class="a" style="left:85px;top:510px;width:632px;height:1px;background:#a0a0a0"></div>
<div class="a" style="left:85px;top:511px;width:632px;height:21px;background:#f2dcdb"></div>
<div class="ms" style="left:89px;top:515px;transform:scaleX(.887)">Mercy Hospital R...</div>
<div class="ms" style="left:188px;top:515px;transform:scaleX(.887)">Item not found</div>
<div class="a" style="left:185px;top:510px;width:1px;height:22px;background:#a0a0a0"></div>
<div class="a" style="left:583px;top:510px;width:1px;height:22px;background:#a0a0a0"></div>
<div class="a" style="left:85px;top:532px;width:632px;height:1px;background:#a0a0a0"></div>
<div class="a" style="left:85px;top:533px;width:632px;height:21px;background:#e2efda"></div>
<div class="ms" style="left:89px;top:537px;transform:scaleX(.887)">California 273, R...</div>
<div class="ms" style="left:188px;top:537px;transform:scaleX(.887)">Redding, Shasta County, California, United States</div>
<div class="ms" style="left:586px;top:537px;transform:scaleX(.887)">administrative</div>
<div class="a" style="left:185px;top:532px;width:1px;height:22px;background:#a0a0a0"></div>
<div class="a" style="left:583px;top:532px;width:1px;height:22px;background:#a0a0a0"></div>
<div class="a" style="left:85px;top:541px;width:632px;height:17px;background:#f0f0f0"></div>
<div class="a" style="left:102px;top:543px;width:210px;height:13px;background:#cdcdcd"></div>
<svg class="a" style="left:85px;top:541px" width="17" height="17"><path d="M10 4.5 L6 8.5 L10 12.5" stroke="#606060" stroke-width="1.7" fill="none"/></svg>
<div class="a" style="left:85px;top:566px;width:103px;height:21px;background:#e1e1e1;border:1px solid #adadad"></div>
<div class="ms" style="left:124px;top:569px;transform:scaleX(0.91);">Draw</div>
<div class="a" style="left:196px;top:566px;width:103px;height:21px;background:#e1e1e1;border:1px solid #adadad"></div>
<div class="ms" style="left:213px;top:569px;transform:scaleX(0.915);">Export to CSV</div>
<div class="a" style="left:329px;top:569px;width:27px;height:17px;background:#e2efda;border:1px solid #606060"></div>
<div class="ms" style="left:364px;top:570px;transform:scaleX(0.912);">14 geocoded items</div>
<div class="a" style="left:503px;top:569px;width:27px;height:17px;background:#f2dcdb;border:1px solid #606060"></div>
<div class="ms" style="left:537px;top:570px;transform:scaleX(0.915);">2 not geocoded items</div>
<div class="a" style="left:650px;top:601px;width:110px;height:21px;background:#e1e1e1;border:1px solid #adadad"></div>
<div class="ms" style="left:672px;top:604px;transform:scaleX(0.89);">Close</div>
<div class="a" style="left:675px;top:276px;width:320px;height:396px;background:#f0f0f0;border:1px solid #3c3c3c"></div>
<div class="a" style="left:676px;top:277px;width:318px;height:30px;background:#fff"></div>
<div class="a ttl" style="left:684px;top:285px">Draw options</div>
<svg class="a" style="left:973px;top:285px" width="12" height="12"><path d="M1 1 L11 11 M11 1 L1 11" stroke="#000" stroke-width="1.1"/></svg>
<div class="a" style="left:689px;top:326px;width:294px;height:56px;border:1px solid #dcdcdc"></div>
<div class="a b" style="left:696px;top:320px;padding:0 2px;background:#f0f0f0">General options</div>
<div class="ms" style="left:698px;top:347px;transform:scaleX(0.945);">Layer/Table name</div>
<div class="a" style="left:796px;top:344px;width:172px;height:21px;background:#fff;border:1px solid #6a7a90"></div>
<div class="ms" style="left:798px;top:347px;transform:scaleX(0.915);">GeocodingDirect</div>
<svg class="a" style="left:954px;top:351px" width="11" height="8"><path d="M1 1.5 L5 5.5 L9 1.5" stroke="#404040" stroke-width="1.2" fill="none"/></svg>
<div class="a" style="left:689px;top:395px;width:294px;height:234px;border:1px solid #dcdcdc"></div>
<div class="a b" style="left:697px;top:389px;padding:0 2px;background:#f0f0f0">Table options</div>
<div class="a" style="left:699px;top:409px;width:269px;height:207px;background:#fff;border:1px solid #86a8d4;overflow:hidden">
<svg class="a" style="left:10px;top:4px" width="9" height="9"><rect x="0.5" y="0.5" width="8" height="8" fill="#f4f4f4" stroke="#9c9c9c"/><path d="M2 4.5 H7" stroke="#000"/></svg><div class="a" style="left:19px;top:8px;width:6px;height:1px;border-top:1px dotted #000"></div><svg class="a" style="left:27px;top:2px" width="12" height="12"><rect x="0.5" y="0.5" width="11" height="11" fill="#fff" stroke="#b4cce4"/><rect x="2.5" y="2.5" width="7" height="7" fill="#d4d4d4" stroke="#9a9a9a"/><path d="M3.5 6.5 L5 8.5 L8.5 3" stroke="#4a6cb0" stroke-width="1.1" fill="none"/></svg><div class="ms" style="left:42px;top:2px;transform:scaleX(.92)">Source</div>
<div class="a" style="left:31px;top:24px;width:10px;height:1px;border-top:1px dotted #000"></div><svg class="a" style="left:43px;top:18px" width="12" height="12"><rect x="0.5" y="0.5" width="11" height="11" fill="#fff" stroke="#b4cce4"/><rect x="2.5" y="2.5" width="7" height="7" fill="#d4d4d4" stroke="#9a9a9a"/><path d="M3.5 6.5 L5 8.5 L8.5 3" stroke="#4a6cb0" stroke-width="1.1" fill="none"/></svg><div class="ms" style="left:58px;top:18px;transform:scaleX(.92)">Street</div>
<div class="a" style="left:31px;top:40px;width:10px;height:1px;border-top:1px dotted #000"></div><svg class="a" style="left:43px;top:34px" width="12" height="12"><rect x="0.5" y="0.5" width="11" height="11" fill="#fff" stroke="#b4cce4"/><rect x="2.5" y="2.5" width="7" height="7" fill="#d4d4d4" stroke="#9a9a9a"/><path d="M3.5 6.5 L5 8.5 L8.5 3" stroke="#4a6cb0" stroke-width="1.1" fill="none"/></svg><div class="ms" style="left:58px;top:34px;transform:scaleX(.92)">N</div>
<div class="a" style="left:31px;top:56px;width:10px;height:1px;border-top:1px dotted #000"></div><svg class="a" style="left:43px;top:50px" width="12" height="12"><rect x="0.5" y="0.5" width="11" height="11" fill="#fff" stroke="#b4cce4"/><rect x="2.5" y="2.5" width="7" height="7" fill="#d4d4d4" stroke="#9a9a9a"/><path d="M3.5 6.5 L5 8.5 L8.5 3" stroke="#4a6cb0" stroke-width="1.1" fill="none"/></svg><div class="ms" style="left:58px;top:50px;transform:scaleX(.92)">City</div>
<svg class="a" style="left:10px;top:68px" width="9" height="9"><rect x="0.5" y="0.5" width="8" height="8" fill="#f4f4f4" stroke="#9c9c9c"/><path d="M2 4.5 H7" stroke="#000"/></svg><div class="a" style="left:19px;top:72px;width:6px;height:1px;border-top:1px dotted #000"></div><svg class="a" style="left:27px;top:66px" width="12" height="12"><rect x="0.5" y="0.5" width="11" height="11" fill="#fff" stroke="#b4cce4"/><rect x="2.5" y="2.5" width="7" height="7" fill="#d4d4d4" stroke="#9a9a9a"/><path d="M3.5 6.5 L5 8.5 L8.5 3" stroke="#4a6cb0" stroke-width="1.1" fill="none"/></svg><div class="ms" style="left:42px;top:66px;transform:scaleX(.92)">Result</div>
<div class="a" style="left:31px;top:88px;width:10px;height:1px;border-top:1px dotted #000"></div><svg class="a" style="left:43px;top:82px" width="12" height="12"><rect x="0.5" y="0.5" width="11" height="11" fill="#fff" stroke="#b4cce4"/><rect x="2.5" y="2.5" width="7" height="7" fill="#d4d4d4" stroke="#9a9a9a"/><path d="M3.5 6.5 L5 8.5 L8.5 3" stroke="#4a6cb0" stroke-width="1.1" fill="none"/></svg><div class="ms" style="left:58px;top:82px;transform:scaleX(.92)">Name</div>
<div class="a" style="left:31px;top:104px;width:10px;height:1px;border-top:1px dotted #000"></div><svg class="a" style="left:43px;top:98px" width="12" height="12"><rect x="0.5" y="0.5" width="11" height="11" fill="#fff" stroke="#b4cce4"/><rect x="2.5" y="2.5" width="7" height="7" fill="#d4d4d4" stroke="#9a9a9a"/><path d="M3.5 6.5 L5 8.5 L8.5 3" stroke="#4a6cb0" stroke-width="1.1" fill="none"/></svg><div class="ms" style="left:58px;top:98px;transform:scaleX(.92)">Type</div>
<div class="a" style="left:31px;top:120px;width:10px;height:1px;border-top:1px dotted #000"></div><svg class="a" style="left:43px;top:114px" width="12" height="12"><rect x="0.5" y="0.5" width="11" height="11" fill="#fff" stroke="#b4cce4"/><rect x="2.5" y="2.5" width="7" height="7" fill="#d4d4d4" stroke="#9a9a9a"/><path d="M3.5 6.5 L5 8.5 L8.5 3" stroke="#4a6cb0" stroke-width="1.1" fill="none"/></svg><div class="ms" style="left:58px;top:114px;transform:scaleX(.92)">house_number</div>
<div class="a" style="left:31px;top:136px;width:10px;height:1px;border-top:1px dotted #000"></div><svg class="a" style="left:43px;top:130px" width="12" height="12"><rect x="0.5" y="0.5" width="11" height="11" fill="#fff" stroke="#b4cce4"/><rect x="2.5" y="2.5" width="7" height="7" fill="#d4d4d4" stroke="#9a9a9a"/><path d="M3.5 6.5 L5 8.5 L8.5 3" stroke="#4a6cb0" stroke-width="1.1" fill="none"/></svg><div class="ms" style="left:58px;top:130px;transform:scaleX(.92)">road</div>
<div class="a" style="left:31px;top:152px;width:10px;height:1px;border-top:1px dotted #000"></div><svg class="a" style="left:43px;top:146px" width="12" height="12"><rect x="0.5" y="0.5" width="11" height="11" fill="#fff" stroke="#b4cce4"/><rect x="2.5" y="2.5" width="7" height="7" fill="#d4d4d4" stroke="#9a9a9a"/><path d="M3.5 6.5 L5 8.5 L8.5 3" stroke="#4a6cb0" stroke-width="1.1" fill="none"/></svg><div class="ms" style="left:58px;top:146px;transform:scaleX(.92)">county</div>
<div class="a" style="left:31px;top:168px;width:10px;height:1px;border-top:1px dotted #000"></div><svg class="a" style="left:43px;top:162px" width="12" height="12"><rect x="0.5" y="0.5" width="11" height="11" fill="#fff" stroke="#b4cce4"/><rect x="2.5" y="2.5" width="7" height="7" fill="#d4d4d4" stroke="#9a9a9a"/><path d="M3.5 6.5 L5 8.5 L8.5 3" stroke="#4a6cb0" stroke-width="1.1" fill="none"/></svg><div class="ms" style="left:58px;top:162px;transform:scaleX(.92)">state</div>
<div class="a" style="left:31px;top:184px;width:10px;height:1px;border-top:1px dotted #000"></div><svg class="a" style="left:43px;top:178px" width="12" height="12"><rect x="0.5" y="0.5" width="11" height="11" fill="#fff" stroke="#b4cce4"/><rect x="2.5" y="2.5" width="7" height="7" fill="#d4d4d4" stroke="#9a9a9a"/><path d="M3.5 6.5 L5 8.5 L8.5 3" stroke="#4a6cb0" stroke-width="1.1" fill="none"/></svg><div class="ms" style="left:58px;top:178px;transform:scaleX(.92)">ISO3166-2-lvl4</div>
<div class="a" style="left:31px;top:200px;width:10px;height:1px;border-top:1px dotted #000"></div><svg class="a" style="left:43px;top:194px" width="12" height="12"><rect x="0.5" y="0.5" width="11" height="11" fill="#fff" stroke="#b4cce4"/><rect x="2.5" y="2.5" width="7" height="7" fill="#d4d4d4" stroke="#9a9a9a"/><path d="M3.5 6.5 L5 8.5 L8.5 3" stroke="#4a6cb0" stroke-width="1.1" fill="none"/></svg><div class="ms" style="left:58px;top:194px;transform:scaleX(.92)">postcode</div>
<div class="a" style="left:30px;top:14px;width:1px;height:43px;border-left:1px dotted #000"></div><div class="a" style="left:30px;top:78px;width:1px;height:132px;border-left:1px dotted #000"></div><div class="a" style="left:250px;top:0px;width:17px;height:206px;background:#f4f4f4"></div><div class="a" style="left:251px;top:18px;width:15px;height:116px;border:1px solid #5a6e8c;border-radius:2px;background:linear-gradient(90deg,#ececec 55%,#c6d8ea 55%)"></div><svg class="a" style="left:250px;top:0" width="17" height="206"><path d="M4.5 11 L8.5 6.5 L12.5 11Z" fill="#3c4a66"/><path d="M4.5 193 L8.5 197.5 L12.5 193Z" fill="#3c4a66"/><path d="M5 73.5h7M5 75.5h7M5 77.5h7M5 79.5h7" stroke="#5a6e8c" stroke-width="1"/></svg>
</div>
<div class="a" style="left:828px;top:638px;width:73px;height:21px;background:#e1e1e1;border:1px solid #adadad"></div>
<div class="ms" style="left:857px;top:641px;transform:scaleX(0.93);">Ok</div>
<div class="a" style="left:909px;top:638px;width:73px;height:21px;background:#e1e1e1;border:1px solid #adadad"></div>
<div class="ms" style="left:927px;top:641px;transform:scaleX(0.94);">Cancel</div>
<svg class="a" style="left:981px;top:658px" width="12" height="12"><g fill="#a9b4b4"><rect x="8" y="1" width="2" height="2"/><rect x="5" y="4" width="2" height="2"/><rect x="8" y="4" width="2" height="2"/><rect x="2" y="7" width="2" height="2"/><rect x="5" y="7" width="2" height="2"/><rect x="8" y="7" width="2" height="2"/></g></svg>
</body></html>
